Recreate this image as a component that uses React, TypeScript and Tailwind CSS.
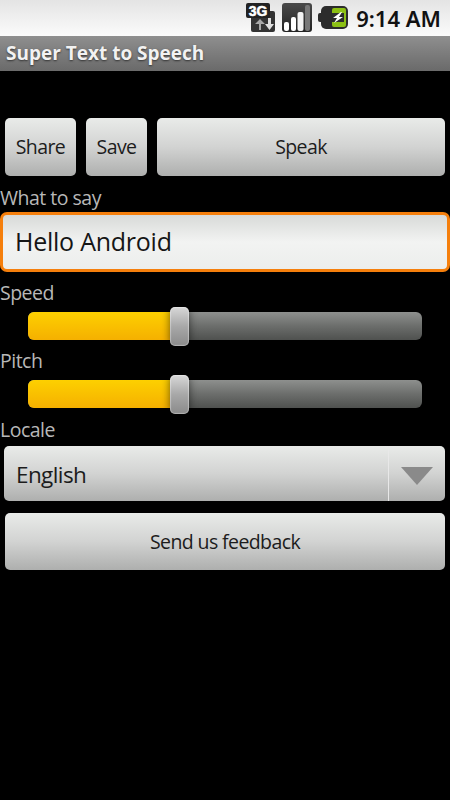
const btn =
  'flex items-center justify-center rounded-[5px] bg-gradient-to-b from-[#e9ebe9] via-[#d2d3d2] to-[#aeafae] text-[19.5px] tracking-[-0.6px] text-[#1c1c1c]';
const label = "text-[19.5px] tracking-[-0.5px] leading-[26px] text-[#b8b8b8]";

function NetIcon() {
  return (
    <svg width="30" height="29" viewBox="0 0 30 29" className="mt-[3px]">
      <rect x="5" y="8" width="24" height="21" rx="2" fill="#333" />
      <rect x="0" y="0" width="24" height="15" rx="2" fill="#222" />
      <text x="12" y="13" textAnchor="middle" fontSize="14" fontWeight="700" fontFamily="Liberation Sans, sans-serif" fill="#fff" stroke="#fff" strokeWidth="0.5">
        3G
      </text>
      <path d="M13 27v-6H9l5-5 5 5h-4v6z" fill="#a8a8a8" />
      <path d="M22 15v6h-3l4.500 6 4.500-6h-3v-6z" fill="#dedede" />
    </svg>
  );
}

function SignalIcon() {
  return (
    <svg width="30" height="29" viewBox="0 0 30 29" className="mt-[3px]">
      <defs>
        <linearGradient id="sig" x1="0" y1="0" x2="0" y2="1">
          <stop offset="0" stopColor="#4a4a4a" />
          <stop offset="1" stopColor="#222" />
        </linearGradient>
      </defs>
      <rect x="0" y="0" width="30" height="29" rx="3" fill="url(#sig)" />
      <rect x="2" y="19" width="5" height="9" rx="2" fill="#fff" />
      <rect x="9" y="14" width="5" height="14" rx="2" fill="#fff" />
      <rect x="15.500" y="9" width="6" height="19" rx="2" fill="#f2f2f2" />
      <rect x="23" y="2" width="5" height="26" rx="2" fill="#777" />
    </svg>
  );
}

function BatteryIcon() {
  return (
    <svg width="30" height="23" viewBox="0 0 30 23" className="mt-[6px]">
      <rect x="0" y="7" width="5" height="9" rx="2" fill="#2c2c2c" />
      <rect x="3" y="0" width="27" height="23" rx="5" fill="#2c2c2c" />
      <rect x="14" y="2" width="14" height="19" rx="2" fill="#8cc014" />
      <rect x="12" y="7" width="14" height="9" fill="#2c2c2c" />
      <path d="M23 6l-8 6h4l-3 5 9-6h-4l3-5z" fill="#fff" />
    </svg>
  );
}

function Slider() {
  return (
    <div className="relative mx-[28px] h-[28px] w-[394px] rounded-[6px] bg-gradient-to-b from-[#8e908e] via-[#6c6e6c] to-[#4f514f]">
      <div className="h-full w-[150px] rounded-l-[6px] bg-gradient-to-b from-[#fdd000] to-[#f5b000]" />
      <div className="absolute left-[142px] top-[-5px] h-[39px] w-[19px] rounded-[5px] bg-gradient-to-b from-[#d8d8d8] via-[#a8a8a8] to-[#8a8a8a] shadow-[0_0_8px_rgba(0,0,0,0.55),inset_0_0_1px_1px_rgba(255,255,255,0.35)]" />
    </div>
  );
}

export default function App() {
  return (
    <div className="flex h-[800px] w-[450px] flex-col overflow-hidden bg-black font-['Open_Sans',sans-serif]">
      <div className="flex h-[36px] shrink-0 items-start justify-end gap-[6px] bg-gradient-to-b from-[#e4e4e4] to-[#fbfbfb] pr-[9px]">
        <NetIcon />
        <SignalIcon />
        <BatteryIcon />
        <span className="ml-[2px] text-[22px] leading-[36px] font-semibold text-[#111] font-['Noto_Sans',sans-serif]">9:14 AM</span>
      </div>
      <div className="flex h-[35px] shrink-0 items-center bg-gradient-to-b from-[#8f8f8f] to-[#6a6a6a] px-[6px] text-[19px] font-bold text-[#f2f2f2] [text-shadow:0_1px_2px_#333]">
        Super Text to Speech
      </div>

      <div className="flex gap-[10px] pt-[47px] pl-[5px] pr-[5px]">
        <div className={`${btn} h-[58px] w-[71px]`}>Share</div>
        <div className={`${btn} h-[58px] w-[61px]`}>Save</div>
        <div className={`${btn} h-[58px] flex-1`}>Speak</div>
      </div>

      <div className={`mt-[9px] h-[27px] ${label}`}>What to say</div>
      <div className="flex h-[60px] w-[450px] items-center rounded-[7px] border-[3px] border-[#f57f0c] bg-gradient-to-b from-[#d8dad8] via-[#f2f3f2] to-[#eceeec] pl-[12px] text-[25px] tracking-[-0.25px] text-[#161616]">
        Hello Android
      </div>

      <div className={`mt-[8px] h-[26px] ${label}`}>Speed</div>
      <div className="mt-[6px]">
        <Slider />
      </div>
      <div className={`mt-[8px] h-[26px] ${label}`}>Pitch</div>
      <div className="mt-[6px]">
        <Slider />
      </div>
      <div className={`mt-[9px] h-[25px] ${label}`}>Locale</div>

      <div className="mt-[4px] ml-[4px] flex h-[55px] w-[441px] rounded-[5px] bg-gradient-to-b from-[#e9ebe9] via-[#d2d3d2] to-[#aeafae]">
        <div className="flex flex-1 items-center border-r border-[#e8e8e8] pt-[3px] pl-[12px] text-[22.5px] tracking-[-0.6px] text-[#1c1c1c]">English</div>
        <div className="flex w-[56px] items-center justify-center pt-[5px]">
          <svg width="32" height="18" viewBox="0 0 32 18">
            <path d="M0 0h32L16 18z" fill="#8a8a8a" />
          </svg>
        </div>
      </div>

      <div className={`${btn} mt-[12px] ml-[5px] h-[57px] w-[440px]`}>Send us feedback</div>
    </div>
  );
}
